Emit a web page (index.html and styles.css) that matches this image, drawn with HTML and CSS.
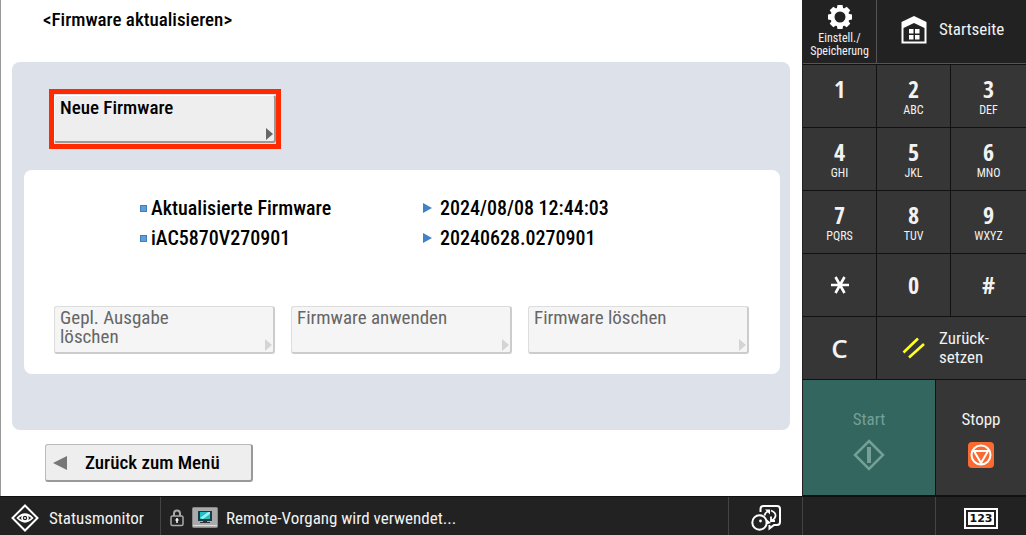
FILE: index.html
```
<!DOCTYPE html>
<html lang="de">
<head>
<meta charset="utf-8">
<meta name="viewport" content="width=device-width, initial-scale=1">
<title>Firmware aktualisieren</title>
<link rel="stylesheet" href="styles.css">
</head>
<body>
<div class="screen">
  <main class="content">
    <h1 class="title">&lt;Firmware aktualisieren&gt;</h1>
    <section class="panel">
      <div class="highlight"><button class="tile">Neue Firmware<span class="corner"></span></button></div>
      <div class="card">
        <dl class="info">
          <dt>Aktualisierte Firmware</dt><dd>2024/08/08 12:44:03</dd>
          <dt>iAC5870V270901</dt><dd>20240628.0270901</dd>
        </dl>
        <div class="actions">
          <button class="tile" disabled>Gepl. Ausgabe<br>löschen<span class="corner"></span></button>
          <button class="tile" disabled>Firmware anwenden<span class="corner"></span></button>
          <button class="tile" disabled>Firmware löschen<span class="corner"></span></button>
        </div>
      </div>
    </section>
    <button class="back"><span class="back-arrow"></span>Zurück zum Menü</button>
  </main>

  <aside class="side">
    <div class="top-keys">
      <button class="key settings">
        <svg width="26" height="26" viewBox="0 0 26 26"><g fill="#fff"><path d="M10.500 1h5l1 5h-7zM10.500 25h5l1-5h-7zM1 10.500v5l5 1v-7zM25 10.500v5l-5 1v-7z"/><path transform="rotate(45 13 13)" d="M10.500 1h5l1 5h-7zM10.500 25h5l1-5h-7zM1 10.500v5l5 1v-7zM25 10.500v5l-5 1v-7z"/></g><circle cx="13" cy="13" r="7.500" fill="none" stroke="#fff" stroke-width="4"/></svg>
        <span>Einstell./<br>Speicherung</span>
      </button>
      <button class="key wide">
        <span class="icon-slot"><svg width="26" height="28" viewBox="0 0 26 28"><path fill="#fff" d="M13 0 25.500 6v21.500H.5V6z"/><path fill="#222" d="M13 7 23.500 12V25.500h-21V12z"/><path fill="#fff" d="M8 13h4.500v4.500H8zM14 13h4.500v4.500H14zM8 19h4.500v4.500H8zM14 19h4.500v4.500H14z"/></svg></span>
        <span>Startseite</span>
      </button>
    </div>
    <div class="keypad">
      <button class="key"><b>1</b><small></small></button>
      <button class="key"><b>2</b><small>ABC</small></button>
      <button class="key"><b>3</b><small>DEF</small></button>
      <button class="key"><b>4</b><small>GHI</small></button>
      <button class="key"><b>5</b><small>JKL</small></button>
      <button class="key"><b>6</b><small>MNO</small></button>
      <button class="key"><b>7</b><small>PQRS</small></button>
      <button class="key"><b>8</b><small>TUV</small></button>
      <button class="key"><b>9</b><small>WXYZ</small></button>
      <button class="key" aria-label="Stern"><svg width="20" height="18" viewBox="0 0 20 18"><path d="M1 9h18M5.500 1l9 16M14.500 1l-9 16" stroke="#fff" stroke-width="2.600"/></svg></button>
      <button class="key"><b>0</b></button>
      <button class="key"><b>#</b></button>
      <button class="key clear">C</button>
      <button class="key wide reset">
        <span class="icon-slot"><svg width="24" height="22" viewBox="0 0 24 22"><path d="M1.500 15.500 16 1.500M7 20.500 22 7" stroke="#ffff26" stroke-width="2.600"/></svg></span>
        <span>Zurück-<br>setzen</span>
      </button>
    </div>
    <div class="run-keys">
      <button class="key start" disabled><span>Start</span>
        <svg width="32" height="32" viewBox="0 0 32 32" fill="none" stroke="#75a097"><path d="M16 2 30 16 16 30 2 16z" stroke-width="2.500"/><path d="M16 8v16" stroke-width="4"/></svg>
      </button>
      <button class="key stop"><span>Stopp</span>
        <svg width="26" height="32" viewBox="0 -3 26 32"><rect width="26" height="26" rx="4" fill="#f96b30"/><g fill="none" stroke="#fff" stroke-width="2"><circle cx="13" cy="13" r="9.500"/><path d="M6 9h14L13 21z" stroke-linejoin="round"/></g></svg>
      </button>
    </div>
  </aside>

  <footer class="status">
    <button class="cell monitor">
      <svg width="28" height="28" viewBox="0 0 28 28" fill="none" stroke="#fff"><path d="M14 1.500 26.500 14 14 26.500 1.500 14z" stroke-width="2"/><path d="M6.500 14Q14 6.500 21.500 14 14 21.500 6.500 14z" stroke-width="1.700"/><circle cx="14" cy="14" r="3" stroke-width="1.600"/><circle cx="14" cy="14" r="1" fill="#fff" stroke="none"/></svg>
      Statusmonitor
    </button>
    <div class="cell message">
      <svg width="14" height="18" viewBox="0 0 14 18"><path d="M4 8V4.500a3 3 0 0 1 6 0V8" fill="none" stroke="#aaa" stroke-width="2"/><rect x="1" y="7" width="12" height="9.500" rx="1.500" fill="#222" stroke="#aaa" stroke-width="1.500"/><path d="M7 9v5M5.500 11h3" stroke="#fff" stroke-width="1.500"/></svg>
      <svg class="screen-icon" width="26" height="22" viewBox="0 0 26 22"><rect x=".5" y=".5" width="25" height="20" rx="1" fill="#aaa" stroke="#888"/><path d="M1 18.500h24" stroke="#ddd"/><rect x="6" y="4" width="14" height="10" fill="#173e46"/><rect x="8" y="5" width="10" height="7" fill="#20bfc4"/><path d="M8 11 16 5h2v2l-7 5z" fill="#9ff0ee"/><path d="M11 14h4v1h3v1H8v-1h3z" fill="#333"/></svg>
      <span>Remote-Vorgang wird verwendet...</span>
    </div>
    <button class="cell language" aria-label="Sprache">
      <svg width="32" height="28" viewBox="0 0 32 28" fill="none" stroke="#fff"><path d="M10.500 8V5q0-3 3-3H27q3 0 3 3v13q0 3-3 3h-3l-4.500 3.500V21" stroke-width="2"/><circle cx="9.500" cy="18.500" r="7.200" stroke-width="2"/><path d="M16 16l3 2.500-3 1" stroke-width="2"/><circle cx="10.500" cy="17" r="1.400" fill="#fff" stroke="none"/><path d="M21 6.500q5 2 4.500 5.500-.5 3-3.500 4.500M21 12.500v4.500h4M14.500 11.500q.5-3 4-4.500" stroke-width="1.800"/><path d="M15 5.500h5v5z" fill="#fff" stroke="none"/></svg>
    </button>
    <div class="cell"></div>
    <button class="cell keyboard" aria-label="Zifferntasten"><span class="digits">123</span></button>
  </footer>
</div>
</body>
</html>
```
FILE: styles.css
```
* { box-sizing: border-box; }
body { margin: 0; background: #fff; }
button { margin: 0; padding: 0; border: 0; font: inherit; color: inherit; }
svg { flex: none; display: block; }

.screen {
  display: grid;
  grid-template-columns: minmax(0, 1fr) 224px;
  grid-template-rows: 1fr auto;
  min-height: 100vh;
  font-family: "Roboto Condensed", "Liberation Sans Narrow", sans-serif;
  font-size: 17px;
}

/* Main area */
.content {
  display: flex;
  flex-direction: column;
  align-items: stretch;
  padding: 8px 12px 14px 11px;
  border-left: 1px solid #999;
  font-size: 19px;
  font-weight: 500;
  color: #000;
}
.title { margin: 0 0 30px 31px; font-size: 19px; font-weight: 500; line-height: 24px; }
.panel {
  flex: 1;
  padding: 27px 10px 56px 12px;
  border-radius: 8px;
  background: #dde1ea;
}
.highlight {
  width: 232px;
  margin: 0 0 21px 25px;
  padding: 1px 0;
  border: 5px solid #ff2a00;
}
.tile {
  position: relative;
  display: flex;
  align-items: flex-start;
  width: 221px;
  height: 48px;
  padding: 2px 5px;
  border: 1px solid #ddd;
  border-right: 2px solid #999;
  border-bottom: 2px solid #999;
  border-radius: 3px;
  background: #eee;
  text-align: left;
  line-height: 19px;
}
.highlight .tile { width: 100%; border-top-color: #fff; border-left-color: #fff; }
.tile:disabled { padding-top: 1px; font-weight: 400; color: #666; background: #f5f5f5; border-color: #ddd #ccc #ccc #ddd; }
.corner {
  position: absolute;
  right: 1px;
  bottom: 1px;
  border: solid transparent;
  border-width: 6px 0 6px 7px;
  border-left-color: #666;
}
.tile:disabled .corner { border-left-color: #d4d4d4; }
.card { padding: 23px 30px 20px; border-radius: 8px; background: #fff; }
.info {
  display: grid;
  grid-template-columns: 283px 1fr;
  margin: 0 0 53px 86px;
  font-size: 20px;
  line-height: 30px;
}
.info dt, .info dd { display: flex; align-items: center; margin: 0; }
.info dt::before {
  content: "";
  width: 7px;
  height: 7px;
  margin-right: 4px;
  border: 1px solid #3f7fbe;
  background: #5f9fd8;
  box-sizing: border-box;
}
.info dd::before {
  content: "";
  margin-right: 8px;
  border: solid transparent;
  border-width: 5px 0 5px 9px;
  border-left-color: #3f82c8;
}
.actions { display: flex; gap: 16px; }
.back {
  display: flex;
  align-items: center;
  gap: 18px;
  width: 208px;
  height: 38px;
  margin: 14px 0 0 33px;
  padding-left: 7px;
  border: 1px solid #bbb;
  border-right: 2px solid #999;
  border-bottom: 2px solid #999;
  border-radius: 3px;
  background: #eee;
}
.back-arrow { border: solid transparent; border-width: 7px 14px 7px 0; border-right-color: #777; }

/* Hardware keys */
.side {
  display: flex;
  flex-direction: column;
  border-left: 1px solid #222;
  background: #111;
  color: #f2f2f2;
}
.key {
  display: flex;
  flex-direction: column;
  align-items: center;
  justify-content: center;
  background: #363636;
  line-height: 19px;
}
.top-keys, .keypad { display: grid; grid-template-columns: 73px 73px 1fr; gap: 1px; }
.top-keys { height: 64px; border-bottom: 1px solid #555; background: #555; }
.top-keys .key { background: #222; }
.top-keys .wide { padding-bottom: 4px; }
.wide { grid-column: span 2; flex-direction: row; justify-content: flex-start; text-align: left; }
.icon-slot { display: flex; justify-content: center; width: 61px; padding-left: 12px; }
.icon-slot + span { margin-left: 1px; }
.settings { gap: 2px; padding-top: 4px; font-size: 12px; line-height: 13px; justify-content: flex-start; }
.keypad { grid-auto-rows: 62px; padding: 1px 0; }
.key b {
  font-family: "Open Sans Condensed", "Roboto Condensed", sans-serif;
  font-size: 24px;
  font-weight: 700;
  line-height: 24px;
}
.key small { height: 14px; font-size: 12px; font-weight: 400; line-height: 18px; }
.clear { font-family: "Open Sans", sans-serif; font-size: 26px; font-weight: 600; }
.run-keys { flex: 1; display: grid; grid-template-columns: 132px 1fr; gap: 1px; padding-bottom: 1px; }
.start, .stop { gap: 10px; padding-top: 5px; }
.start { background: #33665e; color: #75a097; }

/* Status bar */
.status {
  grid-column: 1 / -1;
  display: grid;
  grid-template-columns: 160px minmax(0, 1fr) 74px 133px 91px;
  height: 39px;
  border-top: 1px solid #111;
  background: #222;
  color: #f2f2f2;
}
.cell { display: flex; align-items: center; padding-top: 4px; background: none; white-space: nowrap; }
.cell + .cell { border-left: 1px solid #444; }
.monitor { gap: 10px; padding-left: 11px; }
.message { gap: 8px; padding-left: 9px; }
.language, .keyboard { justify-content: center; }
.digits {
  padding: 0 2px;
  border: 2px solid #222;
  outline: 2px solid #fff;
  background: #fff;
  color: #111;
  font-family: "DejaVu Sans", sans-serif;
  font-size: 11px;
  font-weight: 700;
  line-height: 13px;
}
```
